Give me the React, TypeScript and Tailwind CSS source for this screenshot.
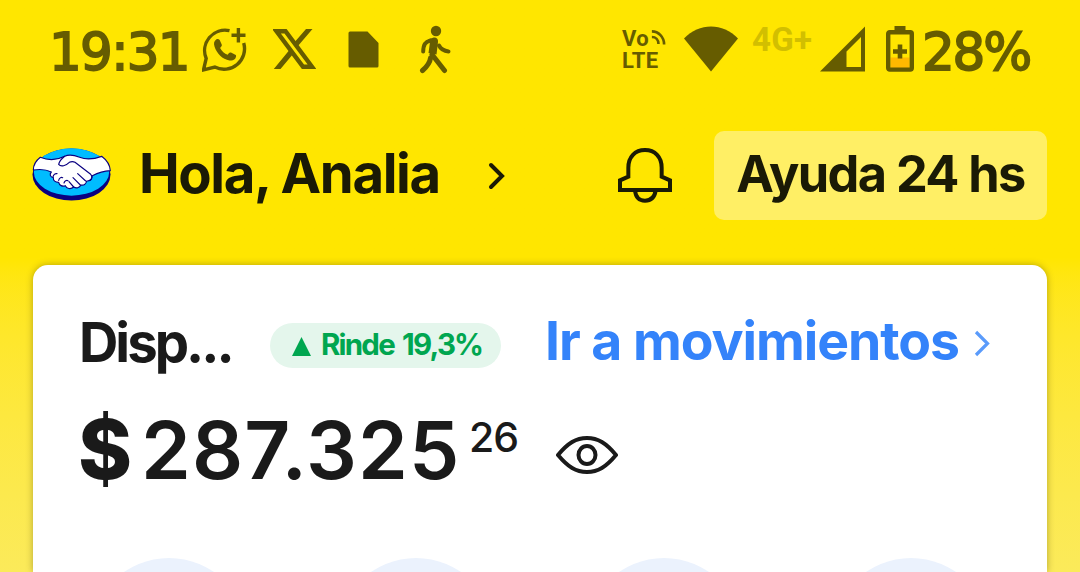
import type { ReactNode } from 'react'

const SHORTCUTS = ['ingresar', 'transferir', 'cvu', 'tarjeta']

interface IconProps {
  className?: string
  viewBox: string
  children: ReactNode
}

function Icon({ className, viewBox, children }: IconProps) {
  return (
    <svg className={`shrink-0 ${className ?? ''}`} viewBox={viewBox} fill="none">
      {children}
    </svg>
  )
}

function StatusBar() {
  return (
    <div className="flex h-[98px] items-center text-[#665c00] font-['DejaVu_Sans',sans-serif]">
      <span className="ml-[49px] mt-[5px] w-[153px] text-[51.5px] leading-[60px] tracking-[-1.7px] whitespace-nowrap [-webkit-text-stroke:1.8px_#665c00]">
        19:31
      </span>

      <Icon className="h-[45px] w-[45px]" viewBox="0 0 45 45">
        <path
          d="M27.5 3.6A20.5 20.5 0 0 0 4.2 31.5L1.5 42.8l11.3-2.7A20.5 20.5 0 0 0 41.7 16"
          stroke="currentColor"
          strokeWidth="3.4"
        />
        <path d="M36.4 1v14.4M29.5 8.2h14" stroke="currentColor" strokeWidth="3.4" />
        <path
          d="M14.5 12.2c-2.5 1.6-3 4.2-2 7.2 2.4 7.4 7.9 12.6 15 14 3.2.7 5.8-.6 6.5-3.6.2-.9.1-1.7-.7-2.1l-4.3-2.1c-.8-.4-1.4-.2-2 .5l-1.3 1.7c-3.3-1.2-5.8-3.5-7.6-6.9l1.4-1.7c.5-.6.4-1.2.1-1.9l-1.800-4.100c-.4-.8-2-1.700-3.300-1z"
          fill="currentColor"
        />
      </Icon>

      <Icon className="ml-[26px] h-[40px] w-[43px]" viewBox="0 0 43 40">
        <path d="M3.5 2.2h9L39 37.8h-9z" stroke="currentColor" strokeWidth="4.4" />
        <path d="M33 0h6.500L24.500 17.500l-3.200-4zM16 21.500l3.200 4.500L7.500 40H.8z" fill="currentColor" />
      </Icon>

      <Icon className="ml-[32px] h-[37px] w-[31px]" viewBox="0 0 31 37">
        <path
          d="M2 .5h17.5L30.5 12v23a1.5 1.5 0 0 1-1.5 1.5H2A1.5 1.5 0 0 1 .5 35V2A1.5 1.5 0 0 1 2 .5z"
          fill="currentColor"
        />
      </Icon>

      <Icon className="ml-[40px] h-[49px] w-[32px]" viewBox="0 0 32 49">
        <circle cx="17" cy="6" r="5.2" fill="currentColor" />
        <path d="M9 14.5l5-1.700c3-.8 5.500 1 5 4.200l-1.500 12.500-8-1.500 1.500-11z" fill="currentColor" />
        <path
          d="M11.5 15.5c-5.500 1.500-7 4-7.300 11M20 20.500c2 4 5 5.500 9.500 6"
          stroke="currentColor"
          strokeWidth="4"
          strokeLinecap="round"
        />
        <path
          d="M13 29.5l12.500 16M11.500 33c-.5 5-4 9-8 12.500"
          stroke="currentColor"
          strokeWidth="5"
          strokeLinecap="round"
        />
      </Icon>

      <div className="ml-[171px] mt-0.5 w-[46px] font-['Roboto',sans-serif] text-[22px] leading-[22px] font-bold tracking-[0.3px]">
        <div className="flex">
          Vo
          <Icon className="ml-px mt-px h-[16px] w-[16px]" viewBox="0 0 17 16">
            <path d="M2 2c7 0 13 6 13 14M2 8c4 0 7 3 7 7.500" stroke="currentColor" strokeWidth="2.8" />
          </Icon>
        </div>
        <div>LTE</div>
      </div>

      <Icon className="ml-[16px] h-[46px] w-[54px]" viewBox="0 0 54 46">
        <path d="M27 45.5L0 12.5C15-3.500 39-3.500 54 12.500z" fill="currentColor" />
      </Icon>

      <span className="mb-[18px] ml-[14px] w-[67px] font-['Roboto',sans-serif] text-[33px] leading-[34px] font-bold tracking-[0.3px] text-[#d2bf00]">
        4G+
      </span>

      <Icon className="ml-px h-[46px] w-[46px]" viewBox="0 0 46 46">
        <path d="M45 .5V45.5H0zM41 11L26.5 25.5V41H41z" fillRule="evenodd" fill="currentColor" />
      </Icon>

      <Icon className="ml-[20px] h-[46px] w-[28px]" viewBox="0 0 28 46">
        <path d="M4.5 31.5h19v11h-19z" fill="#ffb900" />
        <path d="M8.5 0h11v6h-11z" fill="currentColor" />
        <rect x="2.2" y="6.2" width="23.6" height="37.4" rx="1.5" stroke="currentColor" strokeWidth="4.4" />
        <path d="M14 18.5v14M7 25.5h14" stroke="currentColor" strokeWidth="4.6" />
      </Icon>

      <span className="ml-[8px] mt-[5px] text-[51.5px] leading-[60px] tracking-[-2.2px] whitespace-nowrap [-webkit-text-stroke:1.8px_#665c00]">
        28%
      </span>
    </div>
  )
}

function HandshakeLogo() {
  return (
    <Icon className="ml-[32px] mt-[16px] h-[54px] w-[80px]" viewBox="37 52 240 162">
      <ellipse cx="155.5" cy="134.5" rx="117" ry="78" fill="#0a0080" />
      <ellipse cx="155.5" cy="127" rx="113" ry="71" fill="#00bcff" />
      <path
        d="M62 83c24 10 48 10 73-3 14-7 30-3 45 3 24 9 44 5 66-3 16 12 25 28 26 43-19 1-36 6-54 15-2 12-7 17-17 16-2 10-9 14-17 12-5 9-14 11-22 6-9 8-21 5-25-4-9 4-18-1-20-10-10 0-17-5-16-14-10-1-12-11-6-17-16-8-35-9-54-6 0-14 8-28 21-38z"
        fill="#fff"
        stroke="#0a0080"
        strokeWidth="3.5"
        strokeLinejoin="round"
      />
      <path
        d="M135 80c-9 7-16 16-18 24 7 9 22 4 32-6 6-3 12-3 17 0l47 36c5 5 5 14-1 18M198 154l-24-22M182 166l-22-22M162 172l-14-16M117 152c2-7 7-10 12-8M133 160c2-6 7-9 12-7M100 142c1-6 6-11 12-10"
        fill="none"
        stroke="#0a0080"
        strokeWidth="3.5"
        strokeLinecap="round"
        strokeLinejoin="round"
      />
    </Icon>
  )
}

function Header() {
  return (
    <header className="mt-[33px] flex h-[89px] items-start font-['Inter',sans-serif] font-bold text-[#1a1a05]">
      <HandshakeLogo />
      <h1 className="ml-[27px] mt-[10px] w-[349px] text-[54.5px] leading-[64px] tracking-[-1.4px] whitespace-nowrap">
        Hola, Analia
      </h1>
      <Icon className="mt-[31px] h-[28px] w-[18px]" viewBox="0 0 18 28">
        <path d="M3 3l11 11L3 25" stroke="currentColor" strokeWidth="4" strokeLinecap="round" />
      </Icon>
      <Icon className="ml-[110px] mt-[15px] h-[58px] w-[58px]" viewBox="48 78 174 174">
        <path
          d="M85 170v-27c0-32 20-53 50-53s50 21 50 53v27l25 11v29H60v-29z"
          stroke="currentColor"
          strokeWidth="12"
        />
        <path d="M105 211c2 20 12 31 30 31s29-11 32-31" stroke="currentColor" strokeWidth="12" />
      </Icon>
      <button className="ml-[40px] h-[89px] w-[333px] rounded-[10px] bg-[#ffef65] pb-[3px] text-[50.5px] leading-none tracking-[-1.6px] whitespace-nowrap">
        Ayuda 24 hs
      </button>
    </header>
  )
}

function BalanceCard() {
  return (
    <section className="mx-[33px] mt-[45px] h-[307px] overflow-hidden rounded-t-[15px] bg-white text-[#1a1a1a] shadow-[0_0_7px_rgba(70,60,0,0.4)]">
      <div className="flex h-[111px] items-start pt-[45px] font-['Inter',sans-serif] font-bold">
        <h2 className="ml-[46px] w-[191px] text-[54.5px] leading-[64px] tracking-[-3px]">Disp...</h2>
        <div className="mt-[13px] flex h-[45px] w-[231px] items-center rounded-full bg-[#e4f6ec] pl-[22px] text-[#00a650]">
          <Icon className="mt-0.5 h-[19px] w-[19px]" viewBox="0 0 19 19">
            <path d="M9.5 0L19 19H0z" fill="currentColor" />
          </Icon>
          <span className="ml-[10px] mb-[3px] text-[29.5px] tracking-[-1.8px] [word-spacing:3px] whitespace-nowrap">
            Rinde 19,3%
          </span>
        </div>
        <a className="ml-[44px] -mt-px flex items-center text-[53.5px] leading-[64px] tracking-[-1.05px] whitespace-nowrap text-[#3483fa]">
          <span className="w-[429px]">Ir a movimientos</span>
          <Icon className="mt-[5px] h-[27px] w-[17px]" viewBox="0 0 17 27">
            <path d="M2 2l11.5 11.5L2 25" stroke="#5a9bfb" strokeWidth="3.2" />
          </Icon>
        </a>
      </div>

      <div className="mt-[22px] flex h-[100px] items-start font-['Inter',sans-serif]">
        <span className="ml-[45px] mt-0.5 w-[63px] text-[82px] leading-[100px] font-extrabold">$</span>
        <span className="mt-0.5 w-[328px] text-[80px] leading-[100px] font-semibold tracking-[1.1px] whitespace-nowrap">
          287.325
        </span>
        <span className="mt-[9px] w-[87px] text-[41px] leading-[60px] font-medium tracking-[-1px]">26</span>
        <Icon className="mt-[37px] h-[40px] w-[62px]" viewBox="1 0 62 40">
          <path
            d="M3 20C13 8 21 3 32 3s19 5 29 17C51 32 43 37 32 37S13 32 3 20z"
            stroke="currentColor"
            strokeWidth="4"
            strokeLinejoin="round"
          />
          <ellipse cx="32" cy="20" rx="8.5" ry="9" stroke="currentColor" strokeWidth="4" />
        </Icon>
      </div>

      <div className="mx-[57px] mt-[60px] flex justify-between">
        {SHORTCUTS.map((id) => (
          <div key={id} className="h-[158px] w-[158px] rounded-full bg-[#ebf2fd]" />
        ))}
      </div>
    </section>
  )
}

export default function App() {
  return (
    <main className="flex h-[572px] w-[1080px] flex-col overflow-hidden bg-linear-to-b from-[#ffe600] from-45% to-[#fbea5a]">
      <StatusBar />
      <Header />
      <BalanceCard />
    </main>
  )
}
